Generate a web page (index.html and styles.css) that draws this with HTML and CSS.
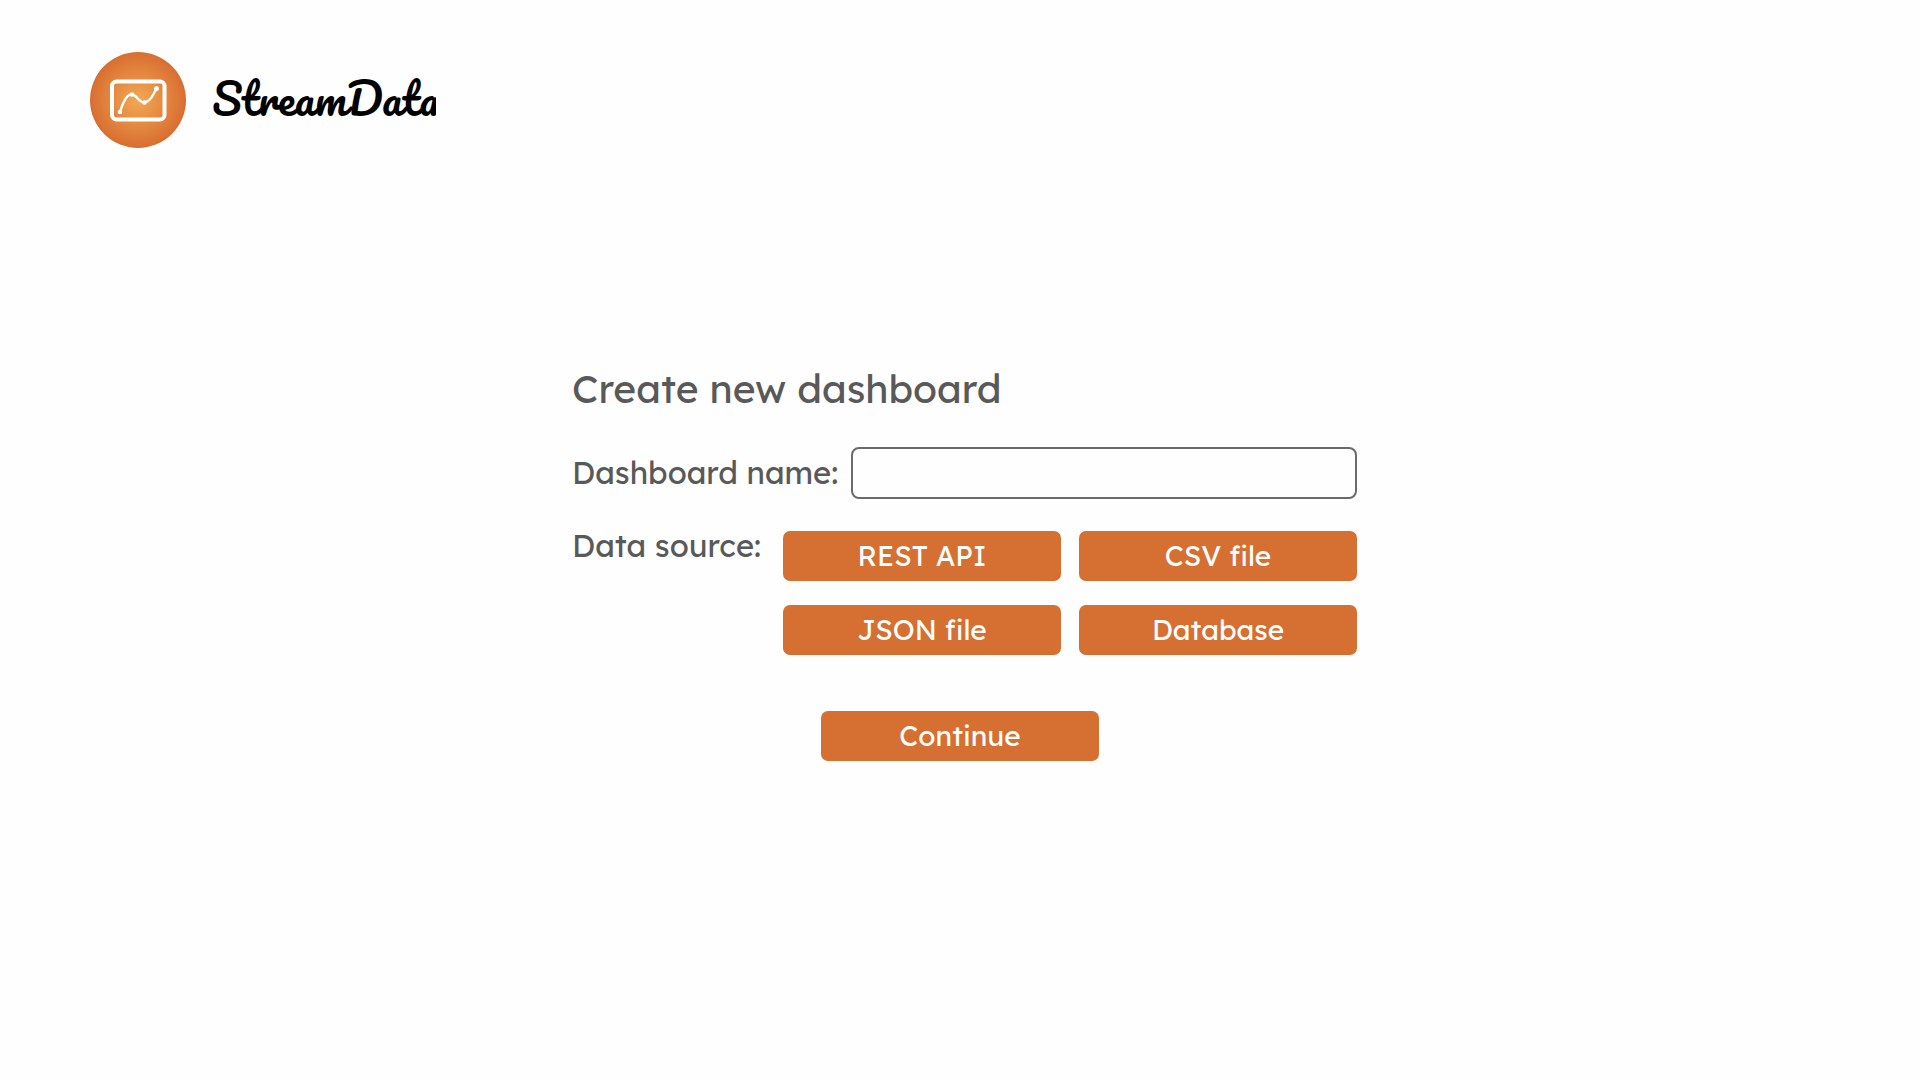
FILE: index.html
```html
<!DOCTYPE html>
<html lang="en">
<head>
<meta charset="utf-8">
<meta name="viewport" content="width=device-width, initial-scale=1">
<title>StreamData</title>
<link rel="stylesheet" href="styles.css">
</head>
<body>
<header class="header">
  <svg class="logo" viewBox="0 0 96 96" aria-hidden="true">
    <defs>
      <radialGradient id="glow">
        <stop offset="0" stop-color="#f3a953"/>
        <stop offset="1" stop-color="#d86e31"/>
      </radialGradient>
    </defs>
    <circle cx="48" cy="48" r="48" fill="url(#glow)"/>
    <rect x="22" y="29.500" width="52.500" height="38" rx="4.500" fill="none" stroke="#fff" stroke-width="4"/>
    <path d="M30 60C33 50 37 42 42 42.500C47 43 49 51 54.500 50.500C60 50 63 43 66.500 36.500" fill="none" stroke="#fff" stroke-width="2.400"/>
    <g fill="#fff">
      <circle cx="30" cy="60" r="2.300"/>
      <circle cx="42" cy="42.500" r="2.300"/>
      <circle cx="54.500" cy="50.500" r="2.300"/>
      <circle cx="66.500" cy="36.500" r="2.500"/>
    </g>
  </svg>
  <span class="brand">StreamData</span>
</header>
<main>
  <form class="form" id="create">
    <h1 class="title">Create new dashboard</h1>
    <div class="name-row">
      <label class="label" for="name">Dashboard name:</label>
      <input class="input" id="name" type="text">
    </div>
    <div class="source-row" role="group" aria-labelledby="source">
      <span class="label" id="source">Data source:</span>
      <div class="sources">
        <button class="button" type="button">REST API</button>
        <button class="button" type="button">CSV file</button>
        <button class="button" type="button">JSON file</button>
        <button class="button" type="button">Database</button>
      </div>
    </div>
  </form>
  <div class="actions"><button class="button continue" type="submit" form="create">Continue</button></div>
</main>
</body>
</html>
```
FILE: styles.css
```css
* {
  box-sizing: border-box;
}

body {
  margin: 0;
  background: #fefefe;
  color: #595959;
  font-family: Lexend, Inter, sans-serif;
}

.header {
  display: flex;
  align-items: center;
  gap: 26px;
  padding: 52px 90px 0;
}

.logo {
  width: 96px;
  height: 96px;
}

.brand {
  max-width: 224px;
  padding-bottom: 4px;
  overflow: hidden;
  color: #000;
  font: 400 43px/56px Pacifico, Lato, sans-serif;
}

.form {
  max-width: 794px;
  margin: 217px auto 0;
  padding-left: 9px;
}

.title {
  margin: 0 0 34px;
  font-size: 39px;
  font-weight: 400;
  line-height: 48px;
}

.label {
  font-size: 31px;
  line-height: 40px;
  white-space: nowrap;
}

.name-row {
  display: flex;
  align-items: center;
  justify-content: space-between;
}

.input {
  width: 506px;
  height: 52px;
  padding: 0 12px;
  border: 2px solid #6a6a6a;
  border-radius: 8px;
  background: #fefefe;
  color: inherit;
  font: inherit;
  font-size: 28px;
}

.source-row {
  display: flex;
  justify-content: space-between;
  margin-top: 27px;
}

.sources {
  display: grid;
  grid-template-columns: 1fr 1fr;
  gap: 24px 18px;
  width: 574px;
  padding-top: 5px;
}

.button {
  height: 50px;
  padding: 0 0 2px;
  border: 0;
  border-radius: 7px;
  background: #d66f32;
  color: #fff;
  font: inherit;
  font-size: 28px;
}

.actions {
  display: flex;
  justify-content: center;
  margin-top: 56px;
}

.continue {
  width: 278px;
}
```
